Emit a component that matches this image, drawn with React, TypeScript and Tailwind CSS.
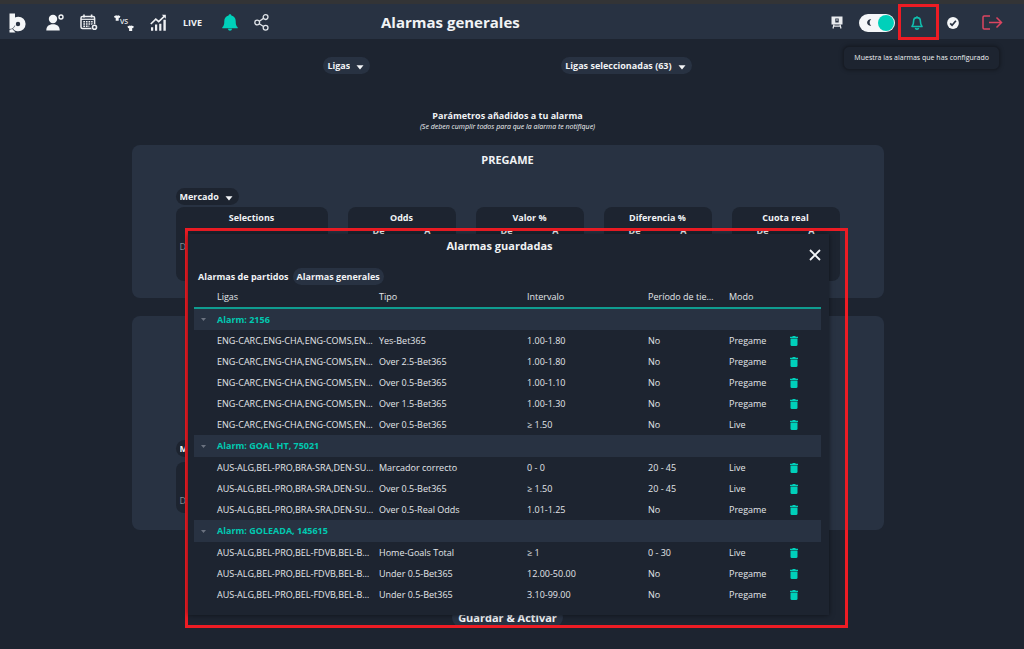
import { useState } from "react";
import type { ReactNode } from "react";

type AlarmRow = {
  leagues: string;
  type: string;
  range: string;
  period: string;
  mode: string;
};

type AlarmGroup = { name: string; rows: AlarmRow[] };

const ENG = "ENG-CARC,ENG-CHA,ENG-COMS,EN…";
const AUS_BRA = "AUS-ALG,BEL-PRO,BRA-SRA,DEN-SU…";
const AUS_BEL = "AUS-ALG,BEL-PRO,BEL-FDVB,BEL-B…";

const groups: AlarmGroup[] = [
  {
    name: "Alarm: 2156",
    rows: [
      { leagues: ENG, type: "Yes-Bet365", range: "1.00-1.80", period: "No", mode: "Pregame" },
      { leagues: ENG, type: "Over 2.5-Bet365", range: "1.00-1.80", period: "No", mode: "Pregame" },
      { leagues: ENG, type: "Over 0.5-Bet365", range: "1.00-1.10", period: "No", mode: "Pregame" },
      { leagues: ENG, type: "Over 1.5-Bet365", range: "1.00-1.30", period: "No", mode: "Pregame" },
      { leagues: ENG, type: "Over 0.5-Bet365", range: "≥ 1.50", period: "No", mode: "Live" },
    ],
  },
  {
    name: "Alarm: GOAL HT, 75021",
    rows: [
      { leagues: AUS_BRA, type: "Marcador correcto", range: "0 - 0", period: "20 - 45", mode: "Live" },
      { leagues: AUS_BRA, type: "Over 0.5-Bet365", range: "≥ 1.50", period: "20 - 45", mode: "Live" },
      { leagues: AUS_BRA, type: "Over 0.5-Real Odds", range: "1.01-1.25", period: "No", mode: "Pregame" },
    ],
  },
  {
    name: "Alarm: GOLEADA, 145615",
    rows: [
      { leagues: AUS_BEL, type: "Home-Goals Total", range: "≥ 1", period: "0 - 30", mode: "Live" },
      { leagues: AUS_BEL, type: "Under 0.5-Bet365", range: "12.00-50.00", period: "No", mode: "Pregame" },
      { leagues: AUS_BEL, type: "Under 0.5-Bet365", range: "3.10-99.00", period: "No", mode: "Pregame" },
    ],
  },
];

const filters = ["Odds", "Valor %", "Diferencia %", "Cuota real"];

function NavLink({ label, children }: { label: string; children: ReactNode }) {
  return (
    <a href="#" aria-label={label} className="flex shrink-0 items-center">
      {children}
    </a>
  );
}

function LogoIcon() {
  return (
    <svg viewBox="0 0 17 20" className="h-5 w-[17px]" fill="#f4f6f8">
      <path
        fillRule="evenodd"
        d="M.5.5h5.500v4c1-.5 2.100-.8 3.300-.8a7.300 7.300 0 0 1 0 14.600c-1.500 0-2.800-.3-3.900-1.100L3.800 15.400.5 16zM9 8.800a2.200 2.200 0 1 0 0 4.400 2.200 2.200 0 0 0 0-4.400z"
      />
      <path d="M5.900 12.500c-.4 1.500-1.300 2.600-2.600 3.200" fill="none" stroke="#283242" strokeWidth=".6" />
      <path d="M.5 16.700l2.800-.8 3.200 3.600H.5z" />
    </svg>
  );
}

function UserIcon() {
  return (
    <svg viewBox="0 0 18 17" className="h-[17px] w-[18px]" fill="#f4f6f8">
      <circle cx="7" cy="5" r="4.200" />
      <path d="M0.300 16.500c0-4.200 2.400-6.300 6.700-6.300s6.700 2.100 6.700 6.300z" />
      <circle cx="15" cy="3" r="2" fill="none" stroke="#f4f6f8" strokeWidth="1.400" />
    </svg>
  );
}

function CalendarIcon() {
  return (
    <svg viewBox="0 0 18 17" className="h-[17px] w-[18px]" fill="none" stroke="#eef0f3">
      <rect x="1" y="2.500" width="13.600" height="12" rx="1.500" strokeWidth="1.500" />
      <path d="M1 5.300h13.600" strokeWidth="1.200" />
      <path d="M4 0.500v3M11.600 0.500v3" strokeWidth="1.600" />
      <path d="M3.300 7.700h9.400M3.300 10h9.400M3.300 12.200h6" strokeWidth="1.500" strokeDasharray="1.700 .9" />
      <circle cx="14.500" cy="13.300" r="3.300" fill="#283242" stroke="none" />
      <circle cx="14.500" cy="13.300" r="2" strokeWidth="1.600" />
    </svg>
  );
}

function VersusIcon() {
  return (
    <span className="relative flex h-4 w-5 items-center justify-center text-[7px] font-semibold text-[#eef0f3]">
      <svg viewBox="0 0 20 16" className="absolute inset-0 h-4 w-5" fill="#f4f6f8">
        <path d="M0 1.300L2.200 0.200c.6.600 1.400.6 2 0L6.400 1.300 5.600 3l-.9-.2v3H1.700v-3L.8 3z" />
        <path d="M13.400 11.500l2.200-1.100c.6.600 1.400.6 2 0l2.300 1.100-.8 1.700-.9-.2v2.900h-3.100V13l-.9.2z" />
      </svg>
      VS
    </span>
  );
}

function ChartIcon() {
  return (
    <svg viewBox="0 0 17 17" className="h-[17px] w-[17px]" fill="#eef0f3">
      <path d="M1 13.300h2.200v3.500H1zM5 10.600h2.200v6.200H5zM9.200 9.700h2.200v7.100H9.200zM13.400 5.800h2.400v11h-2.400z" />
      <path d="M0.800 10l5-4.900 2.900 2.600L15 1.700" fill="none" stroke="#eef0f3" strokeWidth="1.600" />
      <path d="M11.800 0.800h4v4z" />
    </svg>
  );
}

function BellSolid() {
  return (
    <svg viewBox="0 0 16 17" className="h-[17px] w-4" fill="#00d0ba">
      <path d="M8 .3c.8 0 1.300.5 1.400 1.100 2.700.7 4.300 2.800 4.300 5.500 0 3.400.4 4.800 2 6.400v1H.3v-1c1.600-1.600 2-3 2-6.400 0-2.700 1.600-4.800 4.300-5.500C6.700.8 7.200.3 8 .3zM6 14.800h4c0 1.200-.9 1.900-2 1.900s-2-.7-2-1.900z" />
    </svg>
  );
}

function ShareIcon() {
  return (
    <svg viewBox="0 0 15 17" className="h-[17px] w-[15px]" fill="none" stroke="#dfe3e8" strokeWidth="1.300">
      <circle cx="3.200" cy="8.500" r="2.400" />
      <circle cx="11.600" cy="3.100" r="2.400" />
      <circle cx="11.600" cy="13.800" r="2.400" />
      <path d="M5.300 7.200l4.200-2.800M5.300 9.800l4.200 2.700" />
    </svg>
  );
}

function BoardIcon() {
  return (
    <svg viewBox="0 0 12 13" className="h-[13px] w-3" fill="#e9ecef">
      <path fillRule="evenodd" d="M0.500 0.500h11v8h-11zM4.300 2.400h3.400v4H4.300z" />
      <circle cx="6" cy="4" r=".8" />
      <path d="M3 8.500L2 12.500M9 8.500l1 4M3 10.200h6" stroke="#e9ecef" strokeWidth="1.200" />
    </svg>
  );
}

function BellOutline() {
  return (
    <svg viewBox="0 0 12 14" className="h-3.5 w-3" fill="none" stroke="#10bfae" strokeWidth="1.600">
      <path d="M6 1.600c2.200 0 3.400 1.500 3.400 3.600 0 2.800.5 3.900 1.600 5.300H1c1.100-1.400 1.600-2.500 1.600-5.300C2.600 3.100 3.800 1.600 6 1.600zM6 .2v1.400" strokeLinejoin="round" />
      <path d="M4.400 11.800c.2.900.9 1.300 1.600 1.300s1.400-.4 1.600-1.300" />
    </svg>
  );
}

function CheckIcon() {
  return (
    <svg viewBox="0 0 12 12" className="h-3 w-3">
      <circle cx="6" cy="6" r="5.900" fill="#f4f6f8" />
      <path d="M3.200 6.300l1.900 2 3.800-4.600" fill="none" stroke="#283242" strokeWidth="1.700" />
    </svg>
  );
}

function LogoutIcon() {
  return (
    <svg viewBox="0 0 21 15" className="h-[15px] w-[21px]" fill="none" stroke="#dc4560" strokeWidth="1.500">
      <path d="M8 1H2.200C1.400 1 1 1.400 1 2.200v10.600c0 .8.400 1.200 1.200 1.200H8M7 7.500h12.500M14.500 2.500l5 5-5 5" />
    </svg>
  );
}

function TrashIcon() {
  return (
    <svg viewBox="0 0 8 10" className="h-2.5 w-2" fill="#00d0ba">
      <path d="M0 .8h2.200L2.800 0h2.400l.6.800H8v1.100H0zM.5 2.500h7v6.300c0 .7-.4 1.100-1.100 1.100H1.600C.9 9.900.5 9.500.5 8.800z" />
    </svg>
  );
}

function PillSelect({ label, dark }: { label: string; dark?: boolean }) {
  return (
    <div className="relative flex">
      <select
        aria-label={label}
        className={
          "field-sizing-content h-[17px] appearance-none rounded-full pr-5 pl-1 text-[9px] font-bold text-[#f1f3f5] " +
          (dark ? "bg-[#1d2430]" : "bg-[#283242]")
        }
      >
        <option>{label}</option>
      </select>
      <svg viewBox="0 0 8 5" className="pointer-events-none absolute top-2 right-1.5 h-[5px] w-2" fill="#f4f6f8">
        <path d="M0.500 0.300h7L4 4.500z" />
      </svg>
    </div>
  );
}

function Header() {
  const [dark, setDark] = useState(true);

  return (
    <header className="flex h-[39px] items-center border-t-4 border-[#333436] bg-[#283242] pt-0.5 pr-[21px] pl-[9px]">
      <nav className="flex items-center">
        <NavLink label="Inicio"><LogoIcon /></NavLink>
        <div className="ml-5 flex items-center gap-4">
          <NavLink label="Usuario"><UserIcon /></NavLink>
          <NavLink label="Calendario"><CalendarIcon /></NavLink>
          <NavLink label="Comparador"><VersusIcon /></NavLink>
          <NavLink label="Estadísticas"><ChartIcon /></NavLink>
          <a href="#" className="text-[9px] font-bold text-[#f1f3f5]">LIVE</a>
        </div>
        <div className="ml-5 flex items-center gap-4">
          <NavLink label="Alarmas"><BellSolid /></NavLink>
          <NavLink label="Compartir"><ShareIcon /></NavLink>
        </div>
      </nav>

      <h1 className="ml-28 text-[15px] font-bold whitespace-nowrap">Alarmas generales</h1>

      <div className="ml-auto flex items-center">
        <button aria-label="Tutorial"><BoardIcon /></button>
        <label className="relative ml-4 flex h-[18px] w-9 items-center rounded-full bg-[#f4f6f8] pr-px">
          <input
            type="checkbox"
            role="switch"
            aria-label="Modo oscuro"
            checked={dark}
            onChange={() => setDark(!dark)}
            className="absolute inset-0 h-full w-full cursor-pointer opacity-0"
          />
          <svg viewBox="0 0 5 7" className="ml-2 h-[7px] w-[5px]" fill="#283242">
            <path d="M4.200.3A3.300 3.300 0 1 0 4.200 6.700 4 4 0 0 1 4.200.3z" />
          </svg>
          <span className="ml-auto h-4 w-4 rounded-full bg-[#00d0ba]" />
        </label>
        <button aria-label="Alarmas guardadas" className="ml-4"><BellOutline /></button>
        <button aria-label="Verificar" className="ml-6"><CheckIcon /></button>
        <a href="#" aria-label="Salir" className="ml-[23px]"><LogoutIcon /></a>
      </div>
    </header>
  );
}

function FilterBox({ title }: { title: string }) {
  return (
    <div className="h-[74px] flex-1 rounded-lg bg-[#1d2430] pt-1 text-center text-[9px] leading-[13px] font-bold">
      <h4>{title}</h4>
      <div className="flex justify-between px-[25px]">
        <span>De</span>
        <span>A</span>
      </div>
    </div>
  );
}

function Parameters() {
  return (
    <main className="flex flex-col items-center pt-[18px] pr-[9px]">
      <div className="flex gap-[191px]">
        <PillSelect label="Ligas" />
        <PillSelect label="Ligas seleccionadas (63)" />
      </div>

      <div className="mt-[35px] text-center">
        <h2 className="text-[9px] leading-[13px] font-bold">Parámetros añadidos a tu alarma</h2>
        <p className="text-[7px] leading-[9px] italic">
          (Se deben cumplir todos para que la alarma te notifique)
        </p>
      </div>

      <section className="mt-[14px] h-[153px] w-full max-w-[752px] rounded-lg bg-[#283242] px-11 pt-[7px]">
        <h3 className="text-center text-[11px] leading-4 font-bold">PREGAME</h3>
        <div className="mt-5 flex">
          <PillSelect label="Mercado" dark />
        </div>
        <div className="mt-0.5 flex gap-5">
          <div className="h-[74px] w-[152px] rounded-lg bg-[#1d2430] px-1 pt-1 text-[9px] leading-[13px]">
            <h4 className="text-center font-bold">Selections</h4>
            <p className="pt-4 text-[#8a8f98]">De</p>
          </div>
          {filters.map((f) => (
            <FilterBox key={f} title={f} />
          ))}
        </div>
      </section>

      <section className="mt-[18px] h-[214px] w-full max-w-[752px] rounded-lg bg-[#283242] px-11 pt-[7px]">
        <h3 className="text-center text-[11px] leading-4 font-bold">LIVE</h3>
        <div className="mt-[101px] flex">
          <PillSelect label="Mercado" dark />
        </div>
        <div className="mt-[5px] h-[51px] w-[152px] rounded-lg bg-[#1d2430] px-1 pt-8 text-[9px] leading-[13px] text-[#8a8f98]">
          De
        </div>
      </section>

      <button className="mt-[78px] h-[19px] rounded-full bg-[#283242] px-1.5 text-[11px] leading-4 font-bold">
        Guardar &amp; Activar
      </button>
    </main>
  );
}

function AlarmTable() {
  return (
    <table className="mt-px w-full table-fixed text-left text-[9px] text-[#e3e6ea]">
      <colgroup>
        <col className="w-[18px]" />
        <col className="w-[162px]" />
        <col className="w-[148px]" />
        <col className="w-[121px]" />
        <col className="w-[81px]" />
        <col className="w-[61px]" />
        <col />
      </colgroup>
      <thead>
        <tr className="h-[22px] border-b-2 border-[#0f9d90] [&>th]:px-[5px] [&>th]:font-normal [&>th]:whitespace-nowrap">
          <th />
          <th>Ligas</th>
          <th>Tipo</th>
          <th>Intervalo</th>
          <th>Período de tie…</th>
          <th>Modo</th>
          <th />
        </tr>
      </thead>
      {groups.map((g) => (
        <tbody key={g.name}>
          <tr className="h-[22px] bg-[#283242]">
            <td>
              <button aria-label="Contraer" className="flex w-full justify-center">
                <svg viewBox="0 0 5 3" className="h-[3px] w-[5px]" fill="#6b7280">
                  <path d="M0 0h5L2.500 3z" />
                </svg>
              </button>
            </td>
            <th colSpan={6} className="px-[5px] font-bold text-[#00c9b1]">{g.name}</th>
          </tr>
          {g.rows.map((r, i) => (
            <tr key={i} className="h-[21px] [&>td]:px-[5px] [&>td]:whitespace-nowrap">
              <td />
              <td>{r.leagues}</td>
              <td>{r.type}</td>
              <td>{r.range}</td>
              <td>{r.period}</td>
              <td>{r.mode}</td>
              <td>
                <button aria-label="Eliminar" className="flex"><TrashIcon /></button>
              </td>
            </tr>
          ))}
        </tbody>
      ))}
    </table>
  );
}

function SavedAlarms() {
  return (
    <div className="absolute inset-x-0 top-[228px] flex justify-center pl-[9px]">
      <div className="w-full max-w-[663px] border-3 border-[#ed1c24] pt-[3px] pr-4 pb-[10px]">
        <div
          role="dialog"
          aria-label="Alarmas guardadas"
          className="bg-[#1d2430] pr-2 pb-[10px] pl-1.5 shadow-[0_0_5px_rgba(0,0,0,0.5)]"
        >
          <div className="flex h-[34px] items-start gap-1">
            <h2 className="flex-1 pt-1 text-center text-[11px] leading-4 font-bold">Alarmas guardadas</h2>
            <button aria-label="Cerrar" className="mt-[15px] w-3">
              <svg viewBox="0 0 12 12" className="h-3 w-3" stroke="#f4f6f8" strokeWidth="1.800">
                <path d="M1 1l10 10M11 1L1 11" />
              </svg>
            </button>
          </div>
          <div className="flex h-[17px] text-[9px] font-bold">
            <button className="rounded-full px-1">Alarmas de partidos</button>
            <button className="rounded-full bg-[#283242] px-1">Alarmas generales</button>
          </div>
          <AlarmTable />
        </div>
      </div>
    </div>
  );
}

export default function App() {
  return (
    <div className="relative min-h-screen overflow-hidden bg-[#1d2430] font-['Open_Sans',sans-serif] text-[#f1f3f5]">
      <Header />
      <Parameters />
      <SavedAlarms />

      {/* bell highlight and its tooltip */}
      <div className="absolute top-1 right-[85px] h-9 w-[41px] border-3 border-[#ed1c24]" />
      <div
        role="tooltip"
        className="absolute top-[46px] right-6 rounded-md border border-[#171c25] bg-[#1d2430] px-2.5 py-1 text-[7px] leading-[14px] whitespace-nowrap shadow-[0_0_4px_rgba(0,0,0,0.4)]"
      >
        Muestra las alarmas que has configurado
      </div>
    </div>
  );
}
